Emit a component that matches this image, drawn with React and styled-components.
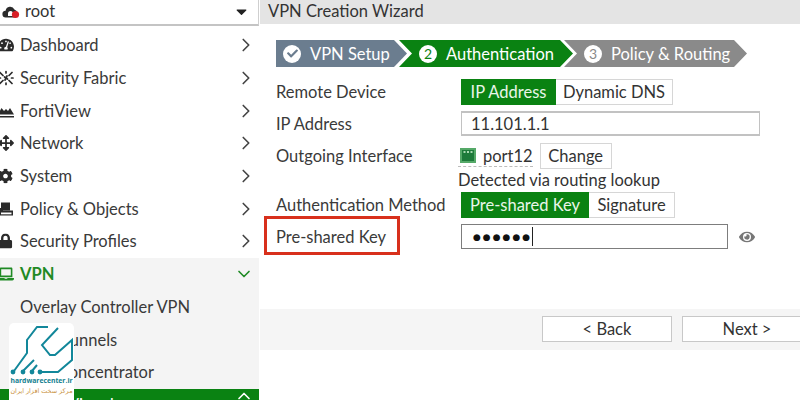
import React from 'react';
import styled, { createGlobalStyle } from 'styled-components';
import { ChevronRight, ChevronDown, ChevronUp } from 'lucide-react';
import {
  FaTachometerAlt,
  FaArrowsAlt,
  FaCog,
  FaLock,
  FaLaptop,
  FaCaretDown,
  FaCheck,
  FaEye,
} from 'react-icons/fa';

const GlobalStyle = createGlobalStyle`
  html, body {
    margin: 0;
    padding: 0;
    width: 800px;
    height: 400px;
    overflow: hidden;
    background: #fff;
    font-family: Lato, "Open Sans", sans-serif;
    font-size: 16.5px;
    color: #333;
  }
  * { box-sizing: border-box; }
`;

const Page = styled.div`
  position: relative;
  display: flex;
  width: 800px;
  height: 400px;
  overflow: hidden;
`;

const Sidebar = styled.aside`
  display: flex;
  flex-direction: column;
  flex: 0 0 259px;
  height: 400px;
  overflow: hidden;
`;

const RootBar = styled.div`
  display: flex;
  align-items: center;
  height: 26px;
  flex: 0 0 26px;
  padding: 0 8px 2px 2px;
  border-right: 1px solid #cfcfcf;
  border-bottom: 2px solid #c4c4c4;
`;

const RootName = styled.span`
  margin-left: 5px;
  flex: 1;
`;

const NavList = styled.nav`
  display: flex;
  flex-direction: column;
  padding-top: 3px;
`;

const NavItem = styled.div`
  display: flex;
  align-items: center;
  height: 32.7px;
  flex: 0 0 32.7px;
  padding-left: 20px;
  padding-right: 2px;
  position: relative;
  font-weight: ${({ $active }) => ($active ? 700 : 400)};
  color: ${({ $active, $selected }) => ($selected ? '#fff' : $active ? '#1f8a24' : '#3a3a3a')};
  background: ${({ $selected }) => ($selected ? '#0a8212' : 'transparent')};
`;

const NavIcon = styled.span`
  position: absolute;
  left: -2px;
  top: 50%;
  transform: translateY(-50%);
  display: flex;
  color: ${({ $active }) => ($active ? '#1f8a24' : '#2b2b2b')};
`;

const NavLabel = styled.span`
  flex: 1;
  white-space: nowrap;
`;

const OpenChevron = styled(ChevronDown)`
  margin-right: 3px;
`;

const ClosedChevron = styled(ChevronUp)`
  margin: 0 3px 17px 0;
`;

const Group = styled.div`
  display: flex;
  flex-direction: column;
  background: #f4f4f4;
`;

const Main = styled.main`
  display: flex;
  flex-direction: column;
  flex: 1;
  min-width: 0;
  overflow: hidden;
  margin-left: 1px;
`;

const Title = styled.header`
  height: 24px;
  flex: 0 0 24px;
  padding-left: 8px;
  background: #e4e4e4;
  line-height: 23px;
  color: #333;
`;

const Steps = styled.div`
  display: flex;
  margin: 16px 0 12px 16px;
`;

const Step = styled.div`
  display: flex;
  align-items: center;
  gap: 9px;
  height: 27px;
  width: ${({ $w }) => $w}px;
  padding-left: ${({ $first }) => ($first ? 7 : 20)}px;
  margin-left: ${({ $overlap }) => $overlap || 0}px;
  background: ${({ $color }) => $color};
  color: #fff;
  white-space: nowrap;
  clip-path: ${({ $first, $w }) =>
    $first
      ? `polygon(0 0, ${$w - 13}px 0, 100% 50%, ${$w - 13}px 100%, 0 100%)`
      : `polygon(0 0, ${$w - 13}px 0, 100% 50%, ${$w - 13}px 100%, 0 100%, 13px 50%)`};
`;

const StepBadge = styled.span`
  display: flex;
  align-items: center;
  justify-content: center;
  width: 18px;
  height: 18px;
  border-radius: 50%;
  background: #fff;
  color: ${({ $color }) => $color};
  font-size: 14px;
  line-height: 18px;
`;

const Form = styled.div`
  display: flex;
  flex-direction: column;
  gap: 6px;
  padding-left: 16px;
`;

const Row = styled.div`
  display: flex;
  align-items: flex-start;
`;

const Label = styled.div`
  flex: 0 0 185px;
  height: 26px;
  line-height: 26px;
  white-space: nowrap;
  color: #3a3a3a;
`;

const Stack = styled.div`
  display: flex;
  flex-direction: column;
`;

const Toggle = styled.div`
  display: flex;
  height: 26px;
`;

const ToggleButton = styled.div`
  display: flex;
  align-items: center;
  justify-content: center;
  width: ${({ $w }) => $w}px;
  color: ${({ $on }) => ($on ? '#e9f6e9' : '#333')};
  background: ${({ $on }) => ($on ? '#0a8212' : '#fff')};
  border: 1px solid ${({ $on }) => ($on ? '#0a8212' : '#d6d6d6')};
  border-left-width: ${({ $on }) => ($on ? 1 : 0)}px;
  white-space: nowrap;
`;

const Field = styled.div`
  display: flex;
  align-items: center;
  width: ${({ $w }) => $w}px;
  height: 25px;
  padding-left: ${({ $dark }) => ($dark ? 11 : 9)}px;
  border: 1px solid ${({ $dark }) => ($dark ? '#7d7d7d' : '#c2c2c2')};
  border-width: ${({ $dark }) => ($dark ? '1px' : '2px 1px')};
  color: #333;
`;

const Dots = styled.span`
  font-family: "DejaVu Sans", sans-serif;
  font-size: 9px;
  letter-spacing: 2px;
  color: #111;
`;

const Caret = styled.span`
  width: 1px;
  height: 19px;
  background: #222;
`;

const PortLine = styled.div`
  display: flex;
  align-items: flex-start;
  height: 26px;
`;

const Port = styled.span`
  display: flex;
  align-items: center;
  gap: 7px;
  height: 24px;
  margin-left: -3px;
  padding: 2px 0 0 2px;
  border-bottom: 1px dashed #bcbcbc;
  color: #333;
`;

const ChangeButton = styled.div`
  display: flex;
  align-items: center;
  justify-content: center;
  width: 72px;
  height: 26px;
  margin-left: 7px;
  border: 1px solid #d6d6d6;
  color: #333;
`;

const Hint = styled.div`
  height: 17px;
  line-height: 22px;
  margin-left: -3px;
  white-space: nowrap;
  color: #333;
`;

const KeyLine = styled.div`
  display: flex;
  align-items: center;
  gap: 11px;
  color: #777;
`;

const Footer = styled.footer`
  display: flex;
  gap: 10px;
  height: 41px;
  margin-top: 59px;
  padding: 7px 0 0 282px;
  background: #f5f5f5;
`;

const WizardButton = styled.div`
  display: flex;
  align-items: center;
  justify-content: center;
  flex: 0 0 130px;
  height: 26px;
  background: #fff;
  border: 1px solid #c8c8c8;
  color: #333;
`;

const Highlight = styled.div`
  position: absolute;
  left: 264px;
  top: 216px;
  width: 136px;
  height: 39px;
  border: 3px solid #d8301c;
`;

const LogoCard = styled.div`
  position: absolute;
  left: 9px;
  top: 323px;
  width: 65px;
  height: 77px;
  padding-top: 2px;
  background: #fff;
  border-radius: 5px 5px 0 0;
  text-align: center;
  overflow: hidden;
  svg { display: block; }
`;

const LogoName = styled.div`
  font-family: "Open Sans", sans-serif;
  font-size: 6.8px;
  font-weight: 700;
  line-height: 10px;
  margin-top: 1px;
  color: #12808f;
  white-space: nowrap;
`;

const LogoTagline = styled.div`
  font-family: "DejaVu Sans", sans-serif;
  font-size: 6.4px;
  line-height: 11px;
  color: #c98f3c;
  white-space: nowrap;
`;

const CloudIcon = () => (
  <svg width="18" height="15" viewBox="0 0 18 15">
    <path d="M4 13.5a3.4 3.4 0 0 1-.4-6.8 4.6 4.6 0 0 1 8.8-1.2A3.6 3.6 0 0 1 15 9v2a2.5 2.5 0 0 1-2.5 2.5z" fill="#2b2b2b" />
    <path d="M6 9.5a2.5 2.5 0 0 1 5 0V12H6z" fill="#fff" />
    <circle cx="13.5" cy="10.5" r="3.6" fill="#d81f26" />
  </svg>
);

const FabricIcon = () => (
  <svg width="16" height="16" viewBox="0 0 16 16" stroke="#2b2b2b" strokeWidth="1.7" strokeLinecap="round" fill="none">
    <path d="M2 2.5l3 3M14 2.5l-3 3M2 13.5l3-3M14 13.5l-3-3M6.5 7l3 2M9 6l-2 4M8 1.5V3M1 8h1.5M13.5 8H15M8 13v1.5" />
  </svg>
);

const ViewIcon = () => (
  <svg width="16" height="16" viewBox="0 0 16 16">
    <path d="M0 11.5L3.5 5l2.5 3 2-2 2 2 2-3 4 6.5z" fill="#2b2b2b" />
    <path d="M0 13h16v1.5H0z" fill="#2b2b2b" />
  </svg>
);

const PolicyIcon = () => (
  <svg width="16" height="16" viewBox="0 0 16 16">
    <path d="M3 1.5h9v8H3z" fill="#2b2b2b" />
    <path d="M1 7v7.5h14V9.5H5V7z" fill="#2b2b2b" />
    <path d="M3 11.5h10.5v1.8H3z" fill="#fff" />
  </svg>
);

const PortIcon = () => (
  <svg width="16" height="15" viewBox="0 0 16 15">
    <rect width="16" height="15" fill="#55a968" />
    <rect x="2" y="2" width="12" height="11" fill="#1d7a3a" />
    <path d="M3.5 3h2v2h-2zM7 3h2v2H7zM10.5 3h2v2h-2z" fill="#a8d8b0" />
  </svg>
);

const HardwareLogo = () => (
  <svg width="65" height="50" viewBox="0 0 65 50" fill="none" stroke="#12879a" strokeWidth="2">
    <path d="M39 2H28L18 15v13L5 46" />
    <path d="M14 46l11-11" />
    <path d="M23 46l5-6" />
    <path d="M49 3L33 20l8 10h5l17-15v20L49 47H31" />
    <g fill="#12879a" stroke="none">
      <circle cx="4" cy="47" r="2.4" />
      <circle cx="14" cy="47" r="2.4" />
      <circle cx="23" cy="47" r="2.4" />
      <circle cx="31" cy="47" r="2.4" />
    </g>
  </svg>
);

const nav = [
  { name: 'Dashboard', icon: <FaTachometerAlt size={16} /> },
  { name: 'Security Fabric', icon: <FabricIcon /> },
  { name: 'FortiView', icon: <ViewIcon /> },
  { name: 'Network', icon: <FaArrowsAlt size={16} /> },
  { name: 'System', icon: <FaCog size={15} /> },
  { name: 'Policy & Objects', icon: <PolicyIcon /> },
  { name: 'Security Profiles', icon: <FaLock size={15} /> },
];

export default function App() {
  return (
    <Page>
      <GlobalStyle />
      <Sidebar>
        <RootBar>
          <CloudIcon />
          <RootName>root</RootName>
          <FaCaretDown size={17} color="#222" />
        </RootBar>
        <NavList>
          {nav.map((item) => (
            <NavItem key={item.name}>
              <NavIcon>{item.icon}</NavIcon>
              <NavLabel>{item.name}</NavLabel>
              <ChevronRight size={22} strokeWidth={1.8} color="#444" />
            </NavItem>
          ))}
          <Group>
            <NavItem $active>
              <NavIcon $active>
                <FaLaptop size={16} />
              </NavIcon>
              <NavLabel>VPN</NavLabel>
              <OpenChevron size={20} strokeWidth={2} color="#1f8a24" />
            </NavItem>
            <NavItem>
              <NavLabel>Overlay Controller VPN</NavLabel>
            </NavItem>
            <NavItem>
              <NavLabel>IPsec Tunnels</NavLabel>
            </NavItem>
            <NavItem>
              <NavLabel>VPN Concentrator</NavLabel>
            </NavItem>
            <NavItem $selected>
              <NavLabel>IPsec Wizard</NavLabel>
              <ClosedChevron size={20} strokeWidth={2} color="#fff" />
            </NavItem>
          </Group>
        </NavList>
      </Sidebar>
      <Main>
        <Title>VPN Creation Wizard</Title>
        <Steps>
          <Step $first $w={131} $color="#6b7d8f">
            <StepBadge $color="#6b7d8f">
              <FaCheck size={11} />
            </StepBadge>
            VPN Setup
          </Step>
          <Step $w={174} $overlap={-8} $color="#0a8212">
            <StepBadge $color="#0a8212">2</StepBadge>
            Authentication
          </Step>
          <Step $w={183} $overlap={-9} $color="#8a8a8a">
            <StepBadge $color="#8a8a8a">3</StepBadge>
            Policy &amp; Routing
          </Step>
        </Steps>
        <Form>
          <Row>
            <Label>Remote Device</Label>
            <Toggle>
              <ToggleButton $on $w={95}>IP Address</ToggleButton>
              <ToggleButton $w={117}>Dynamic DNS</ToggleButton>
            </Toggle>
          </Row>
          <Row>
            <Label>IP Address</Label>
            <Field $w={299}>11.101.1.1</Field>
          </Row>
          <Row>
            <Label>Outgoing Interface</Label>
            <Stack>
              <PortLine>
                <Port>
                  <PortIcon />
                  port12
                </Port>
                <ChangeButton>Change</ChangeButton>
              </PortLine>
              <Hint>Detected via routing lookup</Hint>
            </Stack>
          </Row>
          <Row>
            <Label>Authentication Method</Label>
            <Toggle>
              <ToggleButton $on $w={128}>Pre-shared Key</ToggleButton>
              <ToggleButton $w={86}>Signature</ToggleButton>
            </Toggle>
          </Row>
          <Row>
            <Label>Pre-shared Key</Label>
            <KeyLine>
              <Field $w={267} $dark>
                <Dots>●●●●●●</Dots>
                <Caret />
              </Field>
              <FaEye size={16} />
            </KeyLine>
          </Row>
        </Form>
        <Footer>
          <WizardButton>&lt; Back</WizardButton>
          <WizardButton>Next &gt;</WizardButton>
        </Footer>
      </Main>
      <Highlight />
      <LogoCard>
        <HardwareLogo />
        <LogoName>hardwarecenter.ir</LogoName>
        <LogoTagline>مرکز سخت افزار ایران</LogoTagline>
      </LogoCard>
    </Page>
  );
}
